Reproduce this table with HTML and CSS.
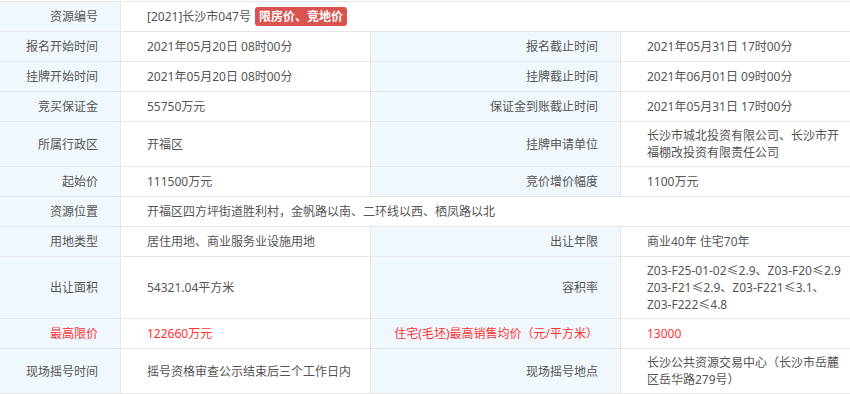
FILE: index.html
```html
<!DOCTYPE html>
<html lang="zh-CN">
<head>
<meta charset="utf-8">
<title>资源信息</title>
<link rel="stylesheet" href="styles.css">
</head>
<body>
<div class="sheet">
  <div class="cell lbl">资源编号</div>
  <div class="cell val span3 last"><span>[2021]长沙市047号</span><span class="badge">限房价、竞地价</span></div>

  <div class="cell lbl">报名开始时间</div>
  <div class="cell val">2021年05月20日 08时00分</div>
  <div class="cell lbl">报名截止时间</div>
  <div class="cell val last">2021年05月31日 17时00分</div>

  <div class="cell lbl">挂牌开始时间</div>
  <div class="cell val">2021年05月20日 08时00分</div>
  <div class="cell lbl">挂牌截止时间</div>
  <div class="cell val last">2021年06月01日 09时00分</div>

  <div class="cell lbl">竞买保证金</div>
  <div class="cell val">55750万元</div>
  <div class="cell lbl">保证金到账截止时间</div>
  <div class="cell val last">2021年05月31日 17时00分</div>

  <div class="cell lbl">所属行政区</div>
  <div class="cell val">开福区</div>
  <div class="cell lbl">挂牌申请单位</div>
  <div class="cell val last">长沙市城北投资有限公司、长沙市开福棚改投资有限责任公司</div>

  <div class="cell lbl">起始价</div>
  <div class="cell val">111500万元</div>
  <div class="cell lbl">竞价增价幅度</div>
  <div class="cell val last">1100万元</div>

  <div class="cell lbl">资源位置</div>
  <div class="cell val span3 last">开福区四方坪街道胜利村，金帆路以南、二环线以西、栖凤路以北</div>

  <div class="cell lbl">用地类型</div>
  <div class="cell val">居住用地、商业服务业设施用地</div>
  <div class="cell lbl">出让年限</div>
  <div class="cell val last">商业40年 住宅70年</div>

  <div class="cell lbl">出让面积</div>
  <div class="cell val">54321.04平方米</div>
  <div class="cell lbl">容积率</div>
  <div class="cell val last"><span class="nowrap">Z03-F25-01-02≤2.9、Z03-F20≤2.9<br>Z03-F21≤2.9、Z03-F221≤3.1、<br>Z03-F222≤4.8</span></div>

  <div class="cell lbl red">最高限价</div>
  <div class="cell val red">122660万元</div>
  <div class="cell lbl red">住宅(毛坯)最高销售均价（元/平方米）</div>
  <div class="cell val red last">13000</div>

  <div class="cell lbl">现场摇号时间</div>
  <div class="cell val">摇号资格审查公示结束后三个工作日内</div>
  <div class="cell lbl">现场摇号地点</div>
  <div class="cell val last">长沙公共资源交易中心（长沙市岳麓区岳华路279号）</div>
</div>
</body>
</html>
```

FILE: styles.css
```css
html, body {
  margin: 0;
  padding: 0;
  background: #fff;
}

body {
  padding-top: 1px;
  font-family: "Noto Sans", "Noto Sans CJK SC", sans-serif;
  font-size: 12px;
  color: #555;
}

.sheet {
  display: grid;
  grid-template-columns: 121px 250px 250px 229px;
  border-top: 1px solid #e6e6e6;
}

.cell {
  box-sizing: border-box;
  min-height: 30px;
  padding: 5px 8px 5px 26px;
  line-height: 17px;
  border-bottom: 1px solid #e6e6e6;
  border-right: 1px solid #e6e6e6;
  display: flex;
  align-items: center;
}

.lbl {
  background: #f1f8fd;
  justify-content: flex-end;
  text-align: right;
  padding: 5px 22px 5px 6px;
}

.last {
  border-right: none;
}

.span3 {
  grid-column: span 3;
}

.nowrap {
  white-space: nowrap;
}

.red {
  color: #ff3333;
}

.badge {
  display: inline-block;
  margin-left: 4px;
  padding: 0 4px;
  line-height: 19px;
  border-radius: 3px;
  background: #d9534f;
  color: #fff;
  font-weight: bold;
}
```
